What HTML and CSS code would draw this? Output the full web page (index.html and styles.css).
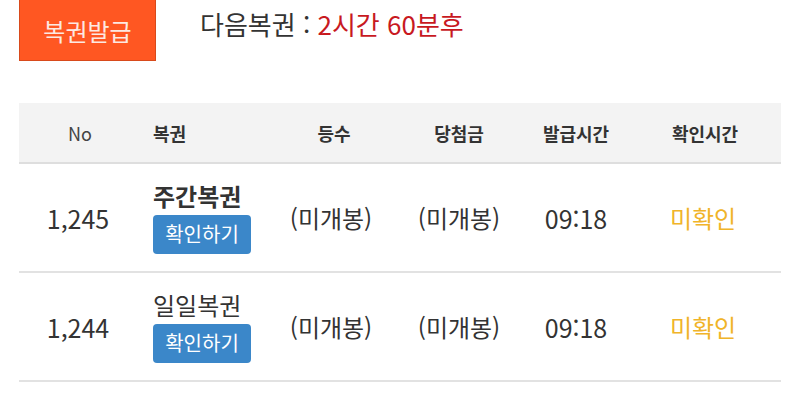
FILE: index.html
```html
<!DOCTYPE html>
<html lang="ko">
<head>
<meta charset="utf-8">
<link rel="stylesheet" href="styles.css">
</head>
<body>
<div class="top">
  <div class="issue-btn">복권발급</div>
  <div class="next">다음복권 : <span class="red">2시간 60분후</span></div>
</div>
<table class="list">
  <colgroup>
    <col class="c1"><col class="c2"><col class="c3"><col class="c4"><col class="c5"><col class="c6">
  </colgroup>
  <thead>
    <tr>
      <th class="no">No</th>
      <th class="left">복권</th>
      <th class="h3">등수</th>
      <th>당첨금</th>
      <th>발급시간</th>
      <th>확인시간</th>
    </tr>
  </thead>
  <tbody>
    <tr>
      <td class="num">1,245</td>
      <td class="left"><div class="name bold">주간복권</div><span class="check">확인하기</span></td>
      <td>(미개봉)</td>
      <td>(미개봉)</td>
      <td class="num">09:18</td>
      <td class="yellow">미확인</td>
    </tr>
    <tr>
      <td class="num">1,244</td>
      <td class="left"><div class="name">일일복권</div><span class="check">확인하기</span></td>
      <td>(미개봉)</td>
      <td>(미개봉)</td>
      <td class="num">09:18</td>
      <td class="yellow">미확인</td>
    </tr>
  </tbody>
</table>
</body>
</html>
```
FILE: styles.css
```css
html, body {
  margin: 0;
  padding: 0;
  background: #fff;
  font-family: "Noto Sans CJK KR", "Noto Sans", sans-serif;
  color: #333;
}
.top {
  display: flex;
  align-items: flex-start;
  padding-left: 19px;
  height: 61px;
}
.issue-btn {
  box-sizing: border-box;
  width: 137px;
  height: 61px;
  background: #ff5722;
  border: 1px solid #d84a1b;
  border-top: none;
  color: #fde9e2;
  font-size: 24px;
  display: flex;
  align-items: center;
  justify-content: center;
}
.next {
  margin-left: 44px;
  font-size: 26px;
  line-height: 1;
  padding-top: 11px;
  color: #333;
}
.red {
  color: #c8191f;
}
.list {
  margin: 42px 0 0 19px;
  width: 762px;
  border-collapse: collapse;
  table-layout: fixed;
}
.c1 { width: 118px; }
.c2 { width: 130px; }
.c3 { width: 128px; }
.c4 { width: 128px; }
.c5 { width: 106px; }
.c6 { width: 152px; }
thead tr {
  background: #f3f3f3;
  height: 60px;
  border-bottom: 2px solid #dedede;
}
th {
  font-size: 18px;
  font-weight: bold;
  color: #333;
  text-align: center;
  padding: 0;
}
th.h3 {
  padding-left: 6px;
}
th.no {
  font-weight: normal;
  font-size: 18px;
  color: #444;
  padding-left: 4px;
}
th.left, td.left {
  text-align: left;
  padding-left: 16px;
}
tbody tr {
  height: 109px;
  border-bottom: 2px solid #e2e2e2;
}
td {
  font-size: 24px;
  text-align: center;
  padding: 0;
  color: #333;
}
td.num {
  font-size: 25px;
}
.name {
  font-size: 24px;
  line-height: 30px;
  margin-bottom: 3px;
}
.bold {
  font-weight: bold;
}
.check {
  display: inline-block;
  box-sizing: border-box;
  width: 98px;
  text-align: center;
  background: #3b87c9;
  color: #fff;
  font-size: 20px;
  line-height: 38px;
  height: 39px;
  border-radius: 4px;
}
.yellow {
  color: #f0b429;
  padding-right: 4px;
}
```
